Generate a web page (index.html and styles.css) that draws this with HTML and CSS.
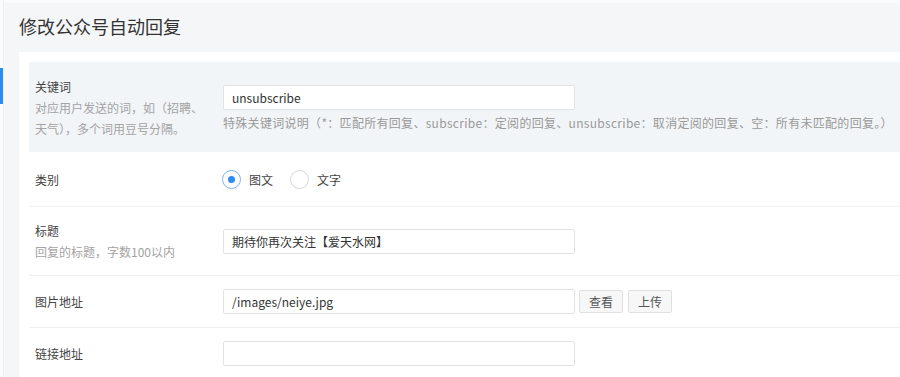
FILE: index.html
```html
<!DOCTYPE html>
<html lang="zh-CN">
<head>
  <meta charset="UTF-8" />
  <title>修改公众号自动回复</title>
  <link rel="stylesheet" href="styles.css">
</head>
<body>

<div class="layout">
  <aside class="sidebar">
    <div class="sidebar-active"></div>
  </aside>

  <main class="main">
    <h1 class="page-title">修改公众号自动回复</h1>

    <div class="card">
      <!-- 关键词 -->
      <div class="form-row highlight">
        <div class="form-label">
          <div class="label-name">关键词</div>
          <div class="label-tip">对应用户发送的词，如（招聘、天气），多个词用豆号分隔。</div>
        </div>
        <div class="form-field">
          <input class="text-input" type="text" value="unsubscribe">
          <div class="field-help">特殊关键词说明（*：匹配所有回复、subscribe：定阅的回复、unsubscribe：取消定阅的回复、空：所有未匹配的回复。）</div>
        </div>
      </div>

      <!-- 类别 -->
      <div class="form-row">
        <div class="form-label">
          <div class="label-name">类别</div>
        </div>
        <div class="form-field">
          <div class="radio-group">
            <label class="radio checked"><span class="radio-dot"></span>图文</label>
            <label class="radio"><span class="radio-dot"></span>文字</label>
          </div>
        </div>
      </div>

      <!-- 标题 -->
      <div class="form-row">
        <div class="form-label">
          <div class="label-name">标题</div>
          <div class="label-tip">回复的标题，字数100以内</div>
        </div>
        <div class="form-field">
          <input class="text-input" type="text" value="期待你再次关注【爱天水网】">
        </div>
      </div>

      <!-- 图片地址 -->
      <div class="form-row">
        <div class="form-label">
          <div class="label-name">图片地址</div>
        </div>
        <div class="form-field inline">
          <input class="text-input" type="text" value="/images/neiye.jpg">
          <button class="btn">查看</button>
          <button class="btn">上传</button>
        </div>
      </div>

      <!-- 链接地址 -->
      <div class="form-row">
        <div class="form-label">
          <div class="label-name">链接地址</div>
        </div>
        <div class="form-field">
          <input class="text-input" type="text" value="">
        </div>
      </div>
    </div>
  </main>
</div>

</body>
</html>
```

FILE: styles.css
```css
* {
  box-sizing: border-box;
}

body {
  margin: 0;
  font-family: "Noto Sans CJK SC", "Liberation Sans", sans-serif;
  font-size: 12px;
  background: #f5f6f8;
  color: #333;
}

.layout {
  display: flex;
  min-height: 100vh;
}

.sidebar {
  width: 4px;
  background: #fbfbfc;
  border-right: 1px solid #eceef1;
  padding-top: 68px;
}

.sidebar-active {
  width: 3px;
  height: 36px;
  background: #2d8cf0;
}

.main {
  flex: 1;
  padding-left: 15px;
  border-top: 3px solid #fafbfc;
}

.page-title {
  margin: 0;
  height: 49px;
  line-height: 47px;
  font-size: 18px;
  font-weight: normal;
  color: #333;
}

.card {
  background: #fff;
  padding: 10px 0 0 10px;
}

.form-row {
  display: flex;
  align-items: center;
  padding: 13px 0;
  border-bottom: 1px solid #eef0f2;
}

.form-row.highlight {
  background: #f2f5f8;
  border-bottom-color: #f2f5f8;
  padding: 14px 0 12px;
}

.form-label {
  width: 194px;
  flex-shrink: 0;
  padding: 0 18px 0 6px;
  line-height: 21px;
}

.label-name {
  color: #444;
}

.label-tip {
  color: #a3a3a3;
}

.form-field {
  flex: 1;
}

.form-field.inline {
  display: flex;
  align-items: center;
  gap: 5px;
}

.text-input {
  display: block;
  width: 352px;
  height: 25px;
  padding: 0 8px;
  border: 1px solid #e3e3e3;
  border-radius: 2px;
  background: #fff;
  font-family: inherit;
  font-size: 12px;
  color: #333;
  outline: none;
}

.field-help {
  margin-top: 5px;
  line-height: 16px;
  color: #999;
  letter-spacing: 0.3px;
}

.btn {
  height: 23px;
  padding: 0 9px;
  margin-left: -1px;
  border: 1px solid #e0e0e0;
  border-radius: 2px;
  background: #f7f7f7;
  font-family: inherit;
  font-size: 12px;
  color: #555;
  cursor: pointer;
}

.btn + .btn {
  margin-left: 0;
}

.radio-group {
  display: flex;
  align-items: center;
  height: 28px;
  gap: 18px;
}

.radio {
  display: flex;
  align-items: center;
  gap: 8px;
  color: #444;
  cursor: pointer;
  margin-left: -1px;
}

.radio-dot {
  width: 19px;
  height: 19px;
  border: 1px solid #d7d7d7;
  border-radius: 50%;
  background: #fff;
  display: flex;
  align-items: center;
  justify-content: center;
}

.radio.checked .radio-dot {
  border-color: #7cb6f2;
}

.radio.checked .radio-dot::after {
  content: "";
  width: 7px;
  height: 7px;
  border-radius: 50%;
  background: #2d8cf0;
}
```
